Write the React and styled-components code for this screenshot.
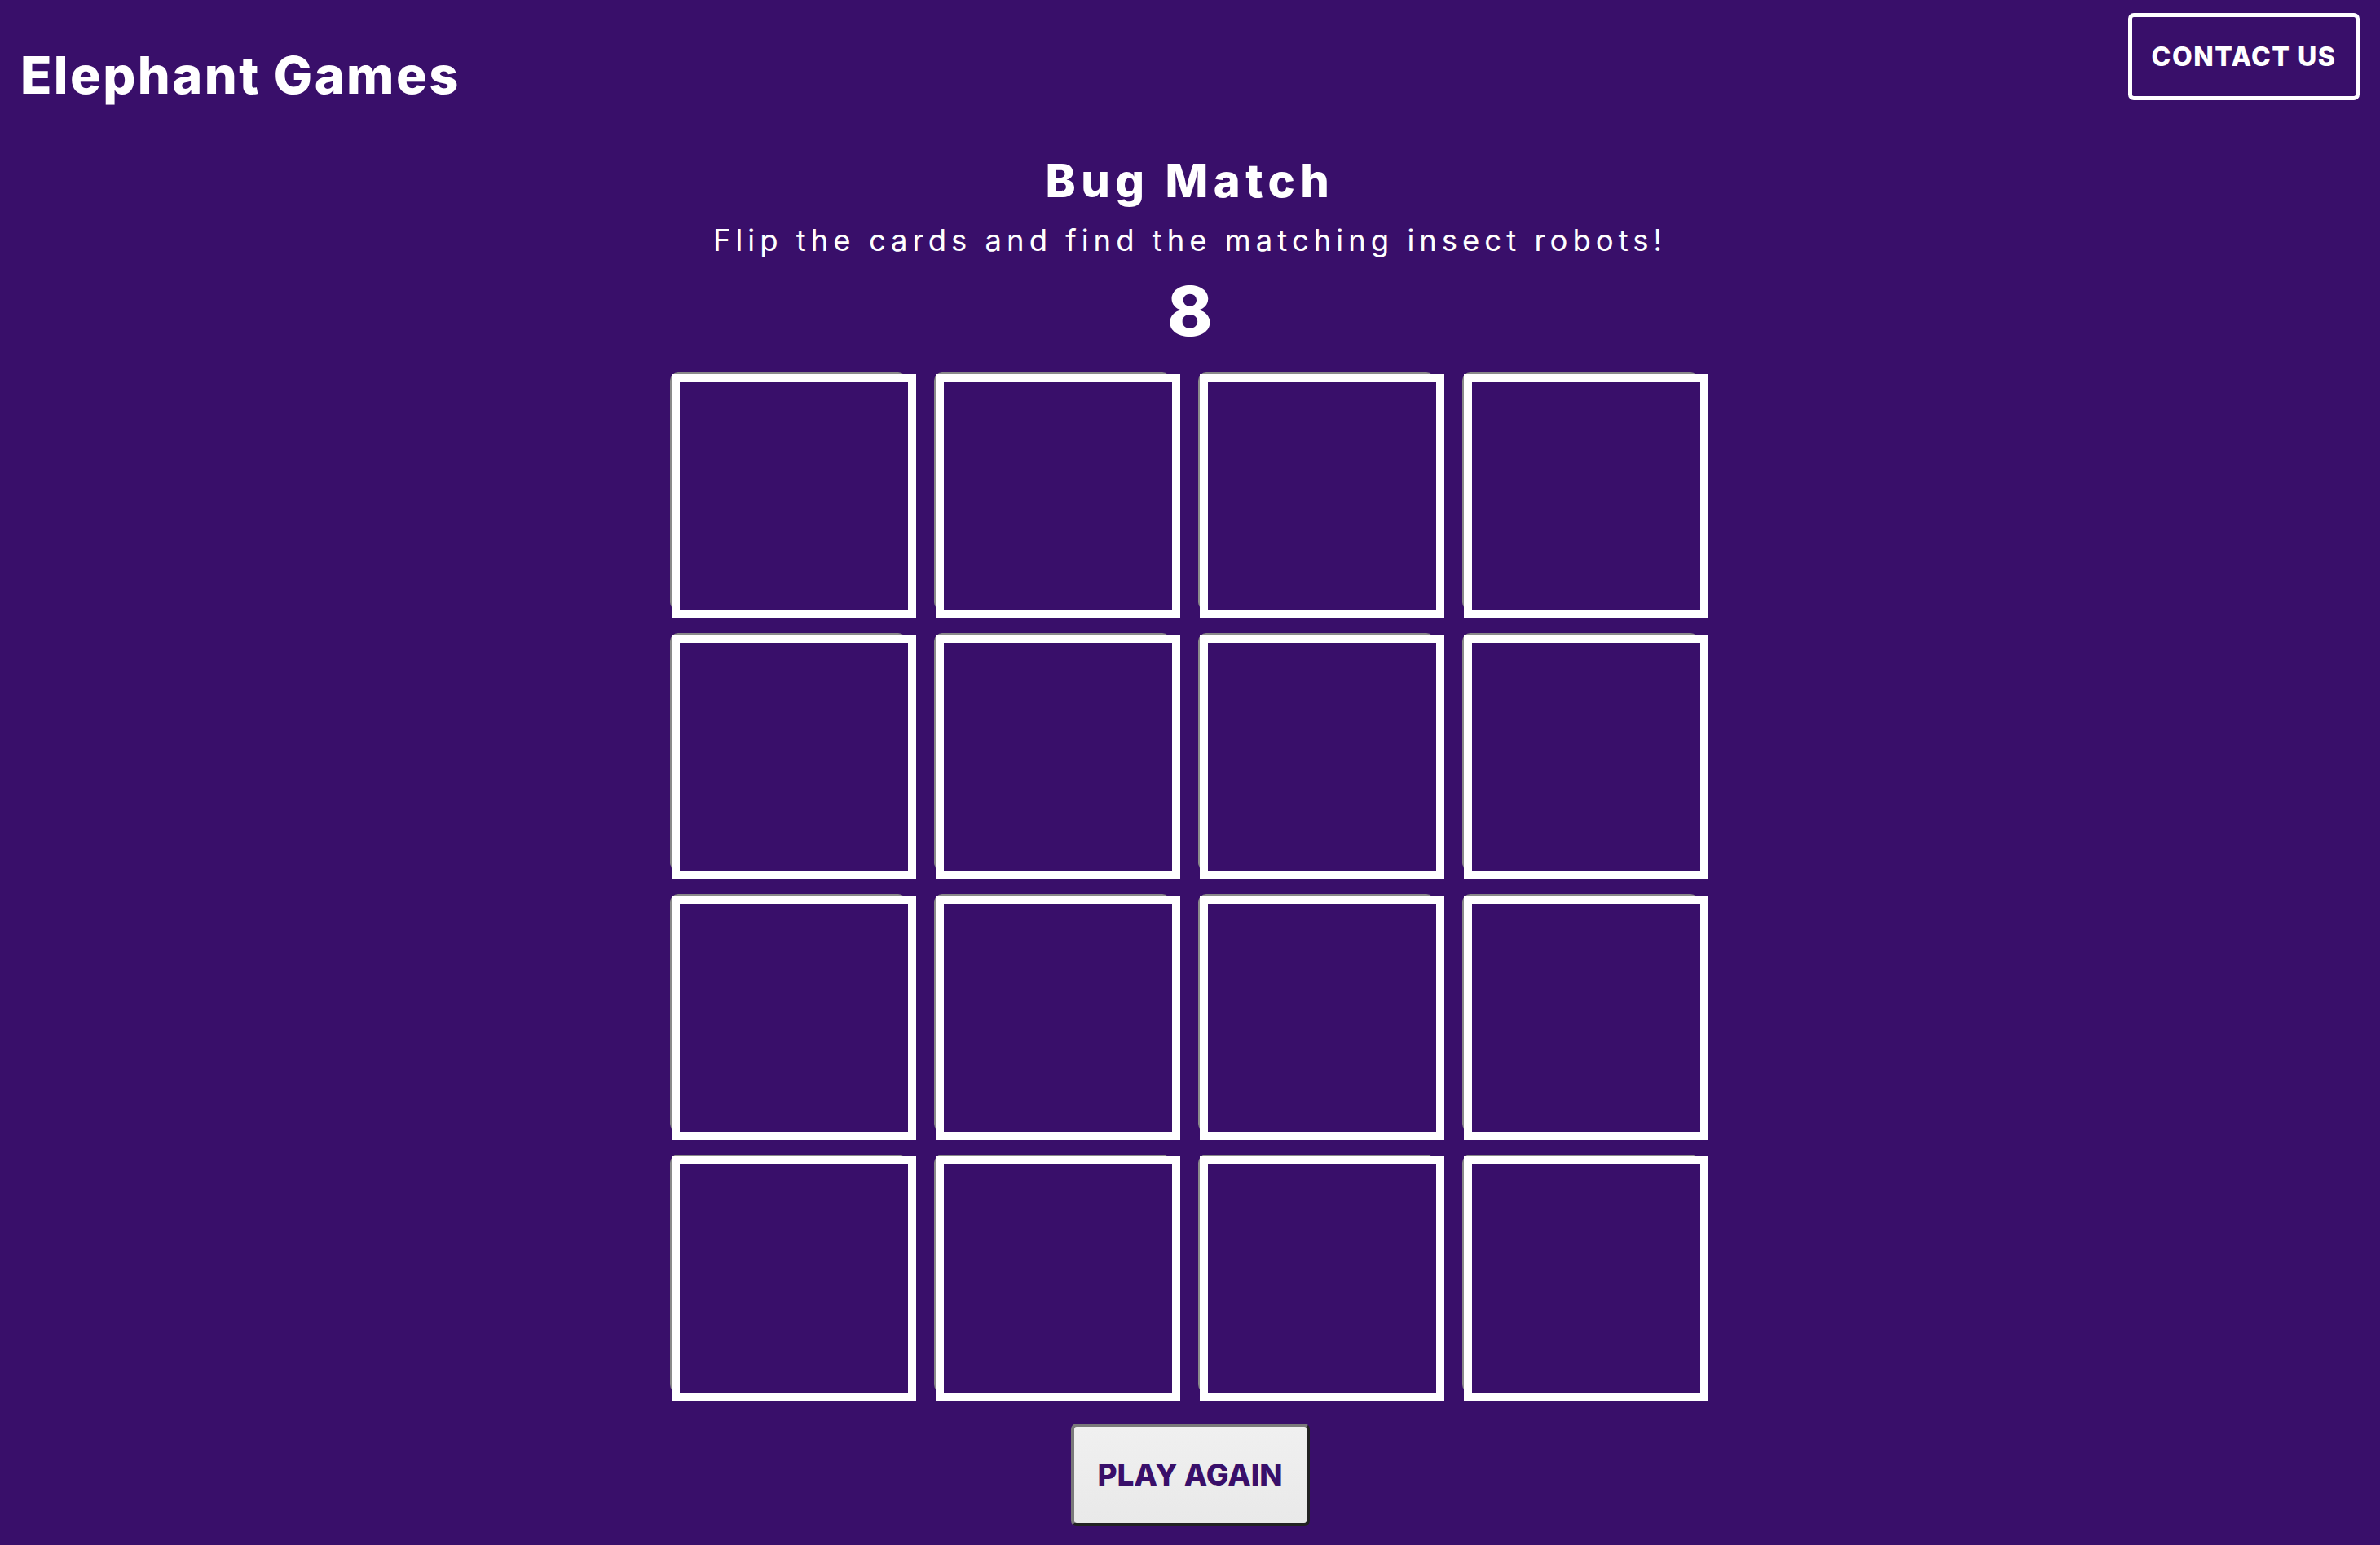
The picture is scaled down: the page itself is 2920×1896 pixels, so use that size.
import React from "react";
import styled, { createGlobalStyle } from "styled-components";

const PURPLE = "#390f6a";

const GlobalStyle = createGlobalStyle`
  html, body {
    margin: 0;
    padding: 0;
    background: ${PURPLE};
  }
  body {
    font-family: Inter, "Open Sans", sans-serif;
    color: #ffffff;
    min-height: 1896px;
  }
`;

const Page = styled.div`
  min-height: 1896px;
  background: ${PURPLE};
  display: flex;
  flex-direction: column;
`;

const Header = styled.header`
  display: flex;
  justify-content: space-between;
  align-items: flex-start;
  padding: 16px 25px 0 25px;
`;

const Logo = styled.div`
  margin-top: 45px;
  font-family: Inter, sans-serif;
  font-weight: 800;
  font-size: 63px;
  line-height: 1;
  letter-spacing: 2.4px;
  color: #fff;
`;

const ContactButton = styled.button`
  box-sizing: border-box;
  width: 284px;
  height: 107px;
  display: flex;
  align-items: center;
  justify-content: center;
  background: transparent;
  border: 5px solid #fff;
  border-radius: 7px;
  color: #fff;
  font-family: Inter, sans-serif;
  font-weight: 800;
  font-size: 32px;
  line-height: 1;
  letter-spacing: 1.5px;
  padding: 0;
`;

const Main = styled.main`
  display: flex;
  flex-direction: column;
  align-items: center;
  margin-top: 70px;
`;

const Title = styled.h1`
  margin: 0;
  font-family: Inter, sans-serif;
  font-weight: 800;
  font-size: 56px;
  line-height: 1;
  letter-spacing: 6.5px;
`;

const Subtitle = styled.p`
  margin: 27px 0 0 0;
  font-family: Inter, sans-serif;
  font-weight: 400;
  font-size: 36.5px;
  line-height: 1;
  letter-spacing: 6px;
`;

const Counter = styled.div`
  margin-top: 26px;
  font-family: Inter, sans-serif;
  font-weight: 800;
  font-size: 84px;
  line-height: 1;
`;

const Board = styled.div`
  margin-top: 35px;
  display: grid;
  grid-template-columns: repeat(4, 300px);
  column-gap: 24px;
  row-gap: 20px;
`;

const CardSlot = styled.div`
  position: relative;
  z-index: 0;
  isolation: isolate;
`;

const Card = styled.button`
  position: relative;
  display: block;
  box-sizing: border-box;
  width: 300px;
  height: 300px;
  padding: 0;
  background: ${PURPLE};
  border: 10px solid #fff;
  cursor: pointer;

  &::before {
    content: "";
    position: absolute;
    left: -12px;
    top: -12px;
    width: 290px;
    height: 292px;
    border-radius: 10px;
    background: #8a8a8a;
    z-index: -1;
  }
`;

const PlayAgain = styled.button`
  margin-top: 28px;
  box-sizing: border-box;
  width: 293px;
  height: 126px;
  border-style: solid;
  border-width: 4px;
  border-color: #7a7a7a #222222 #222222 #7a7a7a;
  border-radius: 7px;
  background: linear-gradient(#f0f0f0, #e9e9e9);
  color: ${PURPLE};
  font-family: Inter, sans-serif;
  font-weight: 800;
  font-size: 37px;
  line-height: 1;
  padding: 0;
`;

export default function App() {
  const cards = Array.from({ length: 16 }, (_, i) => i);
  return (
    <Page>
      <GlobalStyle />
      <Header>
        <Logo>Elephant Games</Logo>
        <ContactButton>CONTACT US</ContactButton>
      </Header>
      <Main>
        <Title>Bug Match</Title>
        <Subtitle>Flip the cards and find the matching insect robots!</Subtitle>
        <Counter>8</Counter>
        <Board>
          {cards.map((i) => (
            <CardSlot key={i}>
              <Card aria-label={`card ${i + 1}`} />
            </CardSlot>
          ))}
        </Board>
        <PlayAgain>PLAY AGAIN</PlayAgain>
      </Main>
    </Page>
  );
}
